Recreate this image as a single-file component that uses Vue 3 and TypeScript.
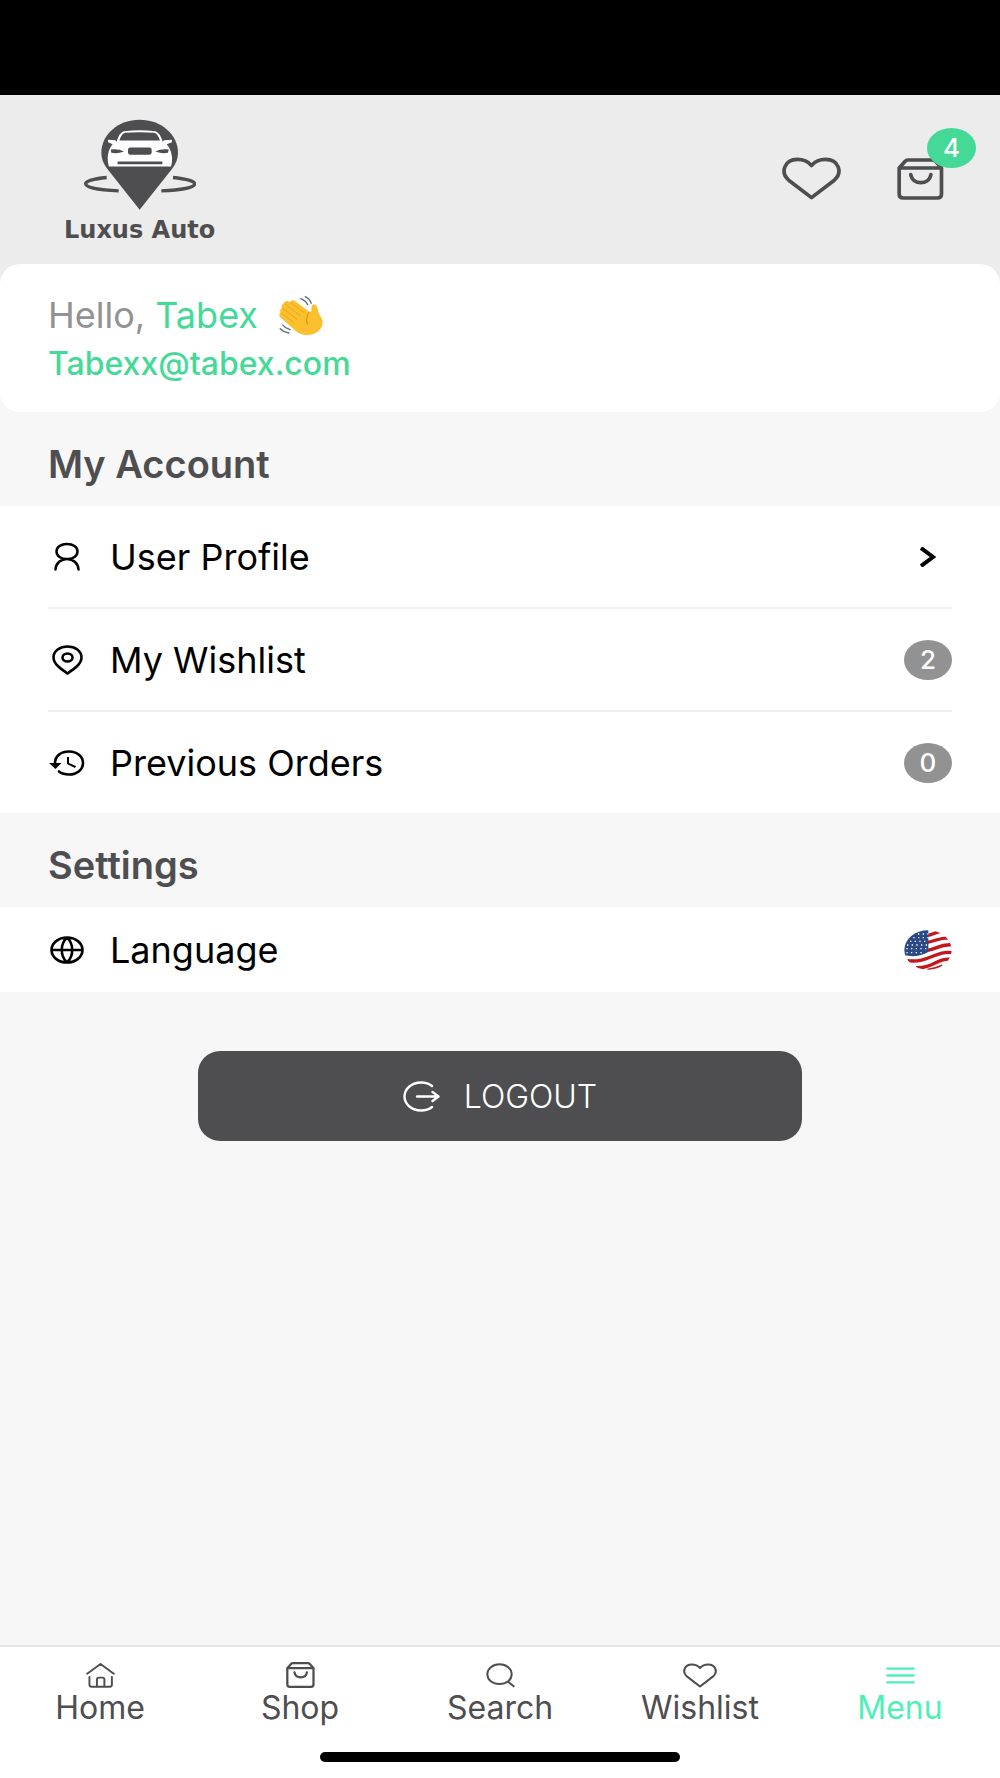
<script setup lang="ts">
interface Shape {
  d: string
  fill?: boolean
}

interface Icon {
  viewBox: string
  width: number
  height: number
  stroke: number
  shapes: Shape[]
}

interface AccountRow {
  label: string
  icon: Icon
  count?: number
}

interface Tab {
  label: string
  icon: Icon
  active?: boolean
}

const heartPath =
  'M154 265 L86 213 C60 190 73 151 112 151 C134 151 147 161 154 169 C161 161 174 151 196 151 C235 151 248 190 222 213 Z'
const bagPath =
  'M420 170 H547 V248 Q547 260 535 260 H432 Q420 260 420 248 Z M420 170 L438 150 Q441 146 446 146 H521 Q526 146 529 150 L547 170 M455 190 C460 222 510 222 515 190'

const heart = (width: number, height: number): Icon => ({
  viewBox: '66 144 176 128', width, height, stroke: 11, shapes: [{ d: heartPath }],
})
const bag = (width: number, height: number): Icon => ({
  viewBox: '414 140 140 126', width, height, stroke: 11, shapes: [{ d: bagPath }],
})

const headerHeart = heart(59, 43)
const headerBag = bag(47, 42)

const user: Icon = {
  viewBox: '0 0 26 29', width: 26, height: 29, stroke: 2.5,
  shapes: [{ d: 'M13 2 C19 2 23.500 5 23.500 9.500 S19 17 13 17 S2.500 14 2.500 9.500 S7 2 13 2 Z M1.500 27.500 C2 21 7 17 13 17 S24 21 24.500 27.500' }],
}
const pin: Icon = {
  viewBox: '0 0 31 30', width: 31, height: 30, stroke: 2.6,
  shapes: [{ d: 'M15.500 28.500 C9 24 1.500 19 1.500 12.500 C1.500 6 8 1.500 15.500 1.500 S29.500 6 29.500 12.500 C29.500 19 22 24 15.500 28.500 Z M15.500 8.500 C18.500 8.500 20.500 10.500 20.500 12.500 S18.500 16.500 15.500 16.500 S10.500 14.500 10.500 12.500 S12.500 8.500 15.500 8.500 Z' }],
}
const history: Icon = {
  viewBox: '0 0 36 26', width: 36, height: 26, stroke: 2.6,
  shapes: [
    { d: 'M6 13 C6 6 12 1.500 20 1.500 S34 6.500 34 13 S28 24.500 20 24.500 C16 24.500 12.500 23.500 10 21.500' },
    { d: 'M18 7 H20 V13 L27 16 L26 18 L18 14 Z', fill: true },
    { d: 'M0 13 L12.500 13 L6.500 19 Z', fill: true },
  ],
}
const globe: Icon = {
  viewBox: '0 0 34 28', width: 34, height: 28, stroke: 2.6,
  shapes: [{ d: 'M17 1.500 C25.500 1.500 32.500 7 32.500 14 S25.500 26.500 17 26.500 S1.500 21 1.500 14 S8.500 1.500 17 1.500 Z M1.500 14 H32.500 M17 1.500 C24 8 24 20 17 26.500 C10 20 10 8 17 1.500 Z' }],
}
const logout: Icon = {
  viewBox: '0 0 37 31', width: 37, height: 31, stroke: 2.4,
  shapes: [{ d: 'M29 5 C26 2.500 22 1.500 18 1.500 C9 1.500 1.500 7.500 1.500 15.500 S9 29.500 18 29.500 C22 29.500 26 28.500 29 26 M14 15.500 H35 M29.500 11 L35.500 15.500 L29.500 20' }],
}
const home: Icon = {
  viewBox: '257 98 88 80', width: 29, height: 26, stroke: 6,
  shapes: [{ d: 'M260 134 L301 104 L342 134 M267 144 V167 Q267 174 274 174 H329 Q336 174 336 167 V144 M290 174 V152 Q290 146 296 146 H307 Q313 146 313 152 V174' }],
}
const search: Icon = {
  viewBox: '1457 98 86 76', width: 29, height: 25, stroke: 6,
  shapes: [{ d: 'M1497 102 C1518 102 1534 115 1534 132 S1518 162 1497 162 S1460 149 1460 132 S1476 102 1497 102 Z M1522 154 L1540 169' }],
}
const menu: Icon = {
  viewBox: '1155 107 88 56', width: 29, height: 19, stroke: 7,
  shapes: [{ d: 'M1159 114 H1239 M1159 135 H1239 M1159 156 H1239' }],
}

const accountRows: AccountRow[] = [
  { label: 'User Profile', icon: user },
  { label: 'My Wishlist', icon: pin, count: 2 },
  { label: 'Previous Orders', icon: history, count: 0 },
]

const tabs: Tab[] = [
  { label: 'Home', icon: home },
  { label: 'Shop', icon: bag(29, 26) },
  { label: 'Search', icon: search },
  { label: 'Wishlist', icon: heart(34, 25) },
  { label: 'Menu', icon: menu, active: true },
]
</script>

<template>
  <div class="screen">
    <div class="status-bar"></div>

    <header class="header">
      <a href="#" class="brand">
        <svg class="brand-mark" viewBox="132 88 336 272" aria-hidden="true">
          <path d="M200 263 C160 267 137 274 137 282 C137 293 175 301 236 303 M399 263 C439 267 464 274 464 282 C464 293 425 301 364 303" fill="none" stroke="#4e4e50" stroke-width="10" />
          <path d="M299 360 L201 236 C190 221 184 207 184 189 C184 134 235 90 299 90 S414 134 414 189 C414 207 408 221 397 236 Z" fill="#4e4e50" />
          <path d="M207 230 C200 210 202 180 218 163 L204 157 V150 L226 151 L230 156 C235 138 241 128 252 124 Q299 119 346 124 C357 128 363 138 368 156 L372 151 L396 150 V157 L380 163 C396 180 400 210 393 230 Z" fill="#fff" />
          <path d="M238 152 C243 138 248 131 256 129 Q299 125 342 129 C350 131 355 138 360 152 Z M212 179 Q236 176 252 185 Q232 193 214 189 Z M386 179 Q362 176 346 185 Q366 193 384 189 Z M233 215 H367 V223 H233 Z" fill="#4e4e50" />
          <rect x="264" y="173" width="71" height="22" rx="7" fill="#4e4e50" />
        </svg>
        <span class="brand-name">Luxus Auto</span>
      </a>
      <div class="header-actions">
        <button type="button" class="icon-button" aria-label="Wishlist">
          <svg :viewBox="headerHeart.viewBox" :width="headerHeart.width" :height="headerHeart.height" class="icon">
            <path v-for="s in headerHeart.shapes" :key="s.d" :d="s.d" :stroke-width="headerHeart.stroke" />
          </svg>
        </button>
        <button type="button" class="icon-button" aria-label="Cart">
          <svg :viewBox="headerBag.viewBox" :width="headerBag.width" :height="headerBag.height" class="icon">
            <path v-for="s in headerBag.shapes" :key="s.d" :d="s.d" :stroke-width="headerBag.stroke" />
          </svg>
          <span class="cart-count">4</span>
        </button>
      </div>
    </header>

    <main class="content">
      <div class="greeting-wrap">
        <section class="greeting">
          <p class="hello">
            <span>Hello, <span class="name">Tabex</span></span>
            <svg class="wave" viewBox="740 102 138 124" aria-hidden="true">
              <path d="M745 168 Q740 159 748 156 Q742 146 752 141 Q748 131 758 128 Q758 119 768 120 L776 124 Q780 116 789 119 L832 151 Q841 157 841 146 Q839 132 847 130 Q856 130 859 143 Q861 158 868 166 Q880 185 869 203 Q855 222 830 223 Q808 224 793 211 Z" fill="#fbc02d" />
              <path d="M748 156 L786 184 M752 141 L796 175 M758 127 L806 164 M776 124 L818 155" stroke="#f0a51e" stroke-width="3" fill="none" stroke-linecap="round" />
              <path d="M833 154 Q822 169 828 190" stroke="#d98a00" stroke-width="3" fill="none" stroke-linecap="round" />
              <path d="M822 107 Q835 113 840 127 M808 113 Q823 118 829 131 M754 193 Q762 203 776 207 M746 204 Q756 214 772 217" stroke="#5c6b73" stroke-width="4" fill="none" stroke-linecap="round" />
            </svg>
          </p>
          <a href="#" class="email">Tabexx@tabex.com</a>
        </section>
      </div>

      <h2 class="section-title">My Account</h2>
      <ul class="list">
        <li v-for="row in accountRows" :key="row.label" class="item">
          <a href="#" class="row">
            <span class="row-icon">
              <svg :viewBox="row.icon.viewBox" :width="row.icon.width" :height="row.icon.height" class="icon">
                <path v-for="s in row.icon.shapes" :key="s.d" :d="s.d" :stroke-width="row.icon.stroke" :class="{ solid: s.fill }" />
              </svg>
            </span>
            <span class="row-label">{{ row.label }}</span>
            <span v-if="row.count !== undefined" class="count">{{ row.count }}</span>
            <span v-else class="chevron">
              <svg viewBox="0 0 16 20" width="16" height="20"><path d="M1 1 L13 10 L1 19" fill="none" stroke="#000" stroke-width="4" /></svg>
            </span>
          </a>
        </li>
      </ul>

      <h2 class="section-title">Settings</h2>
      <ul class="list">
        <li class="item">
          <a href="#" class="row compact">
            <span class="row-icon">
              <svg :viewBox="globe.viewBox" :width="globe.width" :height="globe.height" class="icon">
                <path v-for="s in globe.shapes" :key="s.d" :d="s.d" :stroke-width="globe.stroke" />
              </svg>
            </span>
            <span class="row-label">Language</span>
            <svg class="flag" viewBox="130 122 144 120" role="img" aria-label="United States">
              <defs>
                <clipPath id="flag-clip"><ellipse cx="202" cy="182" rx="71" ry="59" /></clipPath>
              </defs>
              <g clip-path="url(#flag-clip)">
                <rect x="130" y="122" width="144" height="120" fill="#fff" />
                <path d="M196 139 C220 138 225 125 245 126 M196 160 C225 156 238 142 274 146 M196 184 C228 180 240 162 276 167 M140 214 C205 222 225 182 276 190 M166 235 C215 240 230 203 276 210 M200 243 Q225 240 246 230" fill="none" stroke="#c4161c" stroke-width="10" />
                <path d="M130 122 H203 V188 Q172 206 130 198 Z" fill="#2b4a85" />
                <path d="M172 134 H203 M158 145 H203 M148 156 H203 M139 167 H203 M137 178 H203 M137 190 H190" stroke="#fff" stroke-width="4" stroke-dasharray="4 10" fill="none" />
              </g>
            </svg>
          </a>
        </li>
      </ul>

      <button type="button" class="logout">
        <svg :viewBox="logout.viewBox" :width="logout.width" :height="logout.height" class="icon">
          <path v-for="s in logout.shapes" :key="s.d" :d="s.d" :stroke-width="logout.stroke" />
        </svg>
        <span>LOGOUT</span>
      </button>
    </main>

    <nav class="tab-bar">
      <div class="tabs">
        <a v-for="tab in tabs" :key="tab.label" href="#" class="tab" :class="{ active: tab.active }">
          <span class="tab-icon">
            <svg :viewBox="tab.icon.viewBox" :width="tab.icon.width" :height="tab.icon.height" class="icon">
              <path v-for="s in tab.icon.shapes" :key="s.d" :d="s.d" :stroke-width="tab.icon.stroke" />
            </svg>
          </span>
          <span>{{ tab.label }}</span>
        </a>
      </div>
      <div class="home-indicator"></div>
    </nav>
  </div>
</template>

<style>
body {
  background: #f7f7f7;
}
</style>

<style scoped>
.screen {
  display: flex;
  flex-direction: column;
  min-height: 100vh;
  background: #f7f7f7;
  color: #000;
  font-family: Inter, "Open Sans", sans-serif;
  font-optical-sizing: none;
}

.screen * {
  box-sizing: border-box;
}

a {
  color: inherit;
  text-decoration: none;
}

button {
  border: 0;
  padding: 0;
  background: none;
  font-family: inherit;
  cursor: pointer;
}

.icon {
  display: block;
  fill: none;
  stroke: currentColor;
  stroke-linecap: round;
  stroke-linejoin: round;
}

.icon .solid {
  fill: currentColor;
  stroke: none;
}

.status-bar {
  height: 95px;
  background: #000;
}

.header {
  display: flex;
  justify-content: space-between;
  align-items: flex-start;
  padding: 24px 56px 19px 64px;
  background: #ececec;
  color: #4e4e50;
}

.brand {
  display: flex;
  flex-direction: column;
  align-items: center;
  gap: 5px;
}

.brand-mark {
  display: block;
  width: 112px;
  height: 91px;
}

.brand-name {
  font: 700 24px/30px "DejaVu Sans", sans-serif;
}

.header-actions {
  display: flex;
  align-items: center;
  gap: 56px;
  padding-top: 38px;
}

.icon-button {
  position: relative;
  color: #4e4e50;
}

.cart-count {
  position: absolute;
  right: -32px;
  top: -30px;
  width: 49px;
  height: 40px;
  border-radius: 50%;
  background: #45d997;
  color: #fff;
  font-size: 26px;
  font-weight: 500;
  line-height: 40px;
  text-align: center;
}

.content {
  display: flex;
  flex-direction: column;
  flex: 1;
}

.greeting-wrap {
  background: linear-gradient(#ececec 50%, #f7f7f7 50%);
}

.greeting {
  padding: 28px 48px 22px;
  border-radius: 20px;
  background: #fff;
}

.hello {
  display: flex;
  align-items: center;
  gap: 20px;
  margin: 0;
  color: #929292;
  font-size: 36px;
  line-height: 46px;
}

.wave {
  width: 46px;
  height: 41px;
}

.name {
  color: #45d997;
}

.email {
  display: block;
  color: #45d997;
  font-size: 32px;
  font-weight: 500;
  line-height: 52px;
}

.section-title {
  margin: 0;
  padding: 30px 48px 20px;
  color: #4e4e50;
  font-size: 38px;
  font-weight: 600;
  line-height: 44px;
}

.list {
  margin: 0;
  padding: 0 48px;
  background: #fff;
  list-style: none;
}

.item + .item {
  border-top: 2px solid #f0f0f0;
}

.row {
  display: flex;
  align-items: center;
  height: 101px;
}

.row.compact {
  height: 85px;
}

.row-icon {
  display: flex;
  justify-content: center;
  width: 38px;
  margin-right: 24px;
}

.row-label {
  flex: 1;
  font-size: 36px;
  line-height: 44px;
}

.count {
  width: 48px;
  height: 40px;
  border-radius: 50%;
  background: #929292;
  color: #fff;
  font-size: 26px;
  font-weight: 500;
  line-height: 40px;
  text-align: center;
}

.chevron {
  display: flex;
  justify-content: center;
  width: 48px;
}

.flag {
  width: 48px;
  height: 40px;
}

.logout {
  display: flex;
  align-items: center;
  justify-content: center;
  gap: 24px;
  height: 90px;
  margin: 59px 198px;
  border-radius: 22px;
  background: #4e4e50;
  color: #fff;
  font-size: 32px;
  font-weight: 300;
}

.tab-bar {
  padding-bottom: 16px;
  border-top: 2px solid #e6e6e6;
  background: #fff;
}

.tabs {
  display: grid;
  grid-template-columns: repeat(5, 1fr);
  padding: 12px 0;
}

.tab {
  display: flex;
  flex-direction: column;
  align-items: center;
  color: #4e4e50;
  font-size: 32px;
  line-height: 34px;
}

.tab.active {
  color: #4eefb7;
}

.tab-icon {
  display: flex;
  align-items: center;
  height: 32px;
}

.home-indicator {
  width: 36%;
  height: 10px;
  margin: 15px auto 0;
  border-radius: 5px;
  background: #000;
}
</style>
